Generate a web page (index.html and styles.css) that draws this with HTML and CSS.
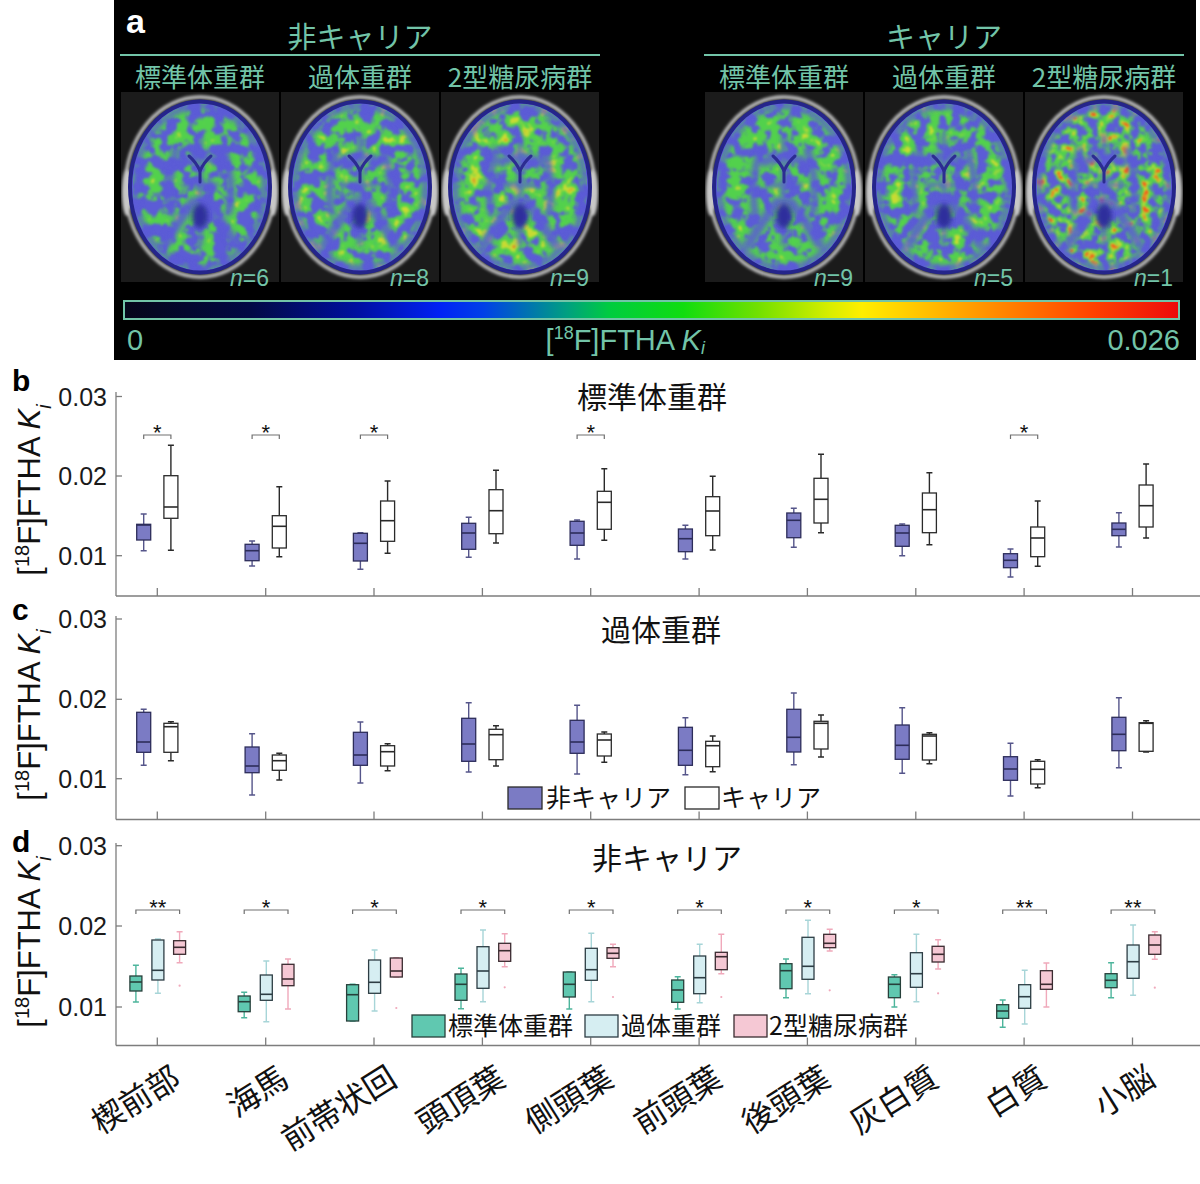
FILE: index.html
```html
<!DOCTYPE html>
<html lang="ja">
<head>
<meta charset="utf-8">
<title>[18F]FTHA Ki</title>
<link rel="stylesheet" href="styles.css">
</head>
<body>
<main class="figure">
  <section class="panel-a">
    <span class="panel-letter">a</span>
    <div class="group">
      <div class="group-title">非キャリア</div>
      <div class="cols">
        <figure class="col"><figcaption class="sub">標準体重群</figcaption><div class="scan"><span class="n"><i>n</i>=6</span></div></figure>
        <figure class="col"><figcaption class="sub">過体重群</figcaption><div class="scan"><span class="n"><i>n</i>=8</span></div></figure>
        <figure class="col"><figcaption class="sub">2型糖尿病群</figcaption><div class="scan"><span class="n"><i>n</i>=9</span></div></figure>
      </div>
    </div>
    <div class="group">
      <div class="group-title">キャリア</div>
      <div class="cols">
        <figure class="col"><figcaption class="sub">標準体重群</figcaption><div class="scan"><span class="n"><i>n</i>=9</span></div></figure>
        <figure class="col"><figcaption class="sub">過体重群</figcaption><div class="scan"><span class="n"><i>n</i>=5</span></div></figure>
        <figure class="col"><figcaption class="sub">2型糖尿病群</figcaption><div class="scan"><span class="n"><i>n</i>=1</span></div></figure>
      </div>
    </div>
    <div class="cbar-wrap">
      <div class="cbar"></div>
      <div class="cbar-labels"><span>0</span><span>[<sup>18</sup>F]FTHA <i>K<sub>i</sub></i></span><span>0.026</span></div>
    </div>
  </section>
  <svg class="chart chart-b" id="chart-b" viewBox="0 360 1200 237" xmlns="http://www.w3.org/2000/svg"></svg>
  <svg class="chart chart-c" id="chart-c" viewBox="0 597 1200 224" xmlns="http://www.w3.org/2000/svg"></svg>
  <svg class="chart chart-d" id="chart-d" viewBox="0 821 1200 363" xmlns="http://www.w3.org/2000/svg"></svg>
</main>
<script src="script.js"></script>
</body>
</html>
```

FILE: styles.css
```css
html, body {
  margin: 0;
  padding: 0;
  background: #ffffff;
}
body {
  font-family: "Liberation Sans", "Noto Sans CJK JP", sans-serif;
  color: #111;
}
.figure {
  width: 1200px;
  height: 1184px;
  overflow: hidden;
  display: flex;
  flex-direction: column;
}
.panel-a {
  position: relative;
  flex: none;
  margin-left: 114px;
  width: 1076px;
  height: 360px;
  padding-left: 6px;
  background: #000;
  display: grid;
  grid-template-columns: 480px 480px;
  grid-template-rows: auto auto;
  column-gap: 104px;
  align-content: start;
  color: #72c4a8;
  font-family: "Liberation Sans", "Noto Sans CJK JP", sans-serif;
}
.panel-letter {
  position: absolute;
  left: 12px;
  top: 4px;
  color: #fff;
  font-weight: bold;
  font-size: 34px;
  line-height: 34px;
}
.group-title {
  height: 38px;
  padding-top: 16px;
  line-height: 38px;
  border-bottom: 2px solid #72c4a8;
  text-align: center;
  font-size: 29px;
  font-family: "Noto Sans CJK JP", sans-serif;
}
.cols {
  display: grid;
  grid-template-columns: repeat(3, 160px);
}
.col {
  margin: 0;
}
.sub {
  height: 36px;
  line-height: 40px;
  font-size: 26px;
  text-align: center;
  white-space: nowrap;
  font-family: "Noto Sans CJK JP", sans-serif;
}
.scan {
  position: relative;
  width: 158px;
  height: 190px;
  margin: 0 auto;
}
.scan svg {
  display: block;
  width: 158px;
  height: 190px;
}
.n {
  position: absolute;
  right: 10px;
  bottom: -8px;
  font-size: 23px;
  line-height: 23px;
}
.cbar-wrap {
  grid-column: 1 / -1;
  margin-top: 18px;
}
.cbar {
  margin-left: 3px;
  width: 1053px;
  height: 16px;
  border: 2px solid #72c4a8;
  background: linear-gradient(to right,
    #06061a 0%, #020a45 12%, #0010a0 22%, #0022f5 30%, #0040e8 34%,
    #00a080 42%, #00cc40 46%, #10dd10 53%, #70e000 60%, #d8ee00 67%,
    #ffee00 70%, #ffc000 76%, #ff8000 84%, #ff4000 92%, #ee0a0a 100%);
}
.cbar-labels {
  margin-left: 7px;
  width: 1053px;
  display: flex;
  justify-content: space-between;
  font-size: 29px;
  line-height: 40px;
}
.cbar-labels sup {
  font-size: 0.62em;
  vertical-align: 0.62em;
  line-height: 0;
}
.cbar-labels sub {
  font-size: 0.62em;
  vertical-align: -0.25em;
  line-height: 0;
}
.chart {
  display: block;
  flex: none;
  width: 1200px;
  overflow: visible;
}
.chart-b { height: 237px; }
.chart-c { height: 224px; }
.chart-d { height: 363px; }
.ax {
  stroke: #7d7d7d;
  stroke-width: 1.3;
  fill: none;
}
.tick {
  font-size: 25px;
  fill: #1a1a1a;
}
.plet {
  font-size: 30px;
  font-weight: bold;
  fill: #000;
}
.ptitle {
  font-size: 30px;
  fill: #111;
  font-family: "Noto Sans CJK JP", sans-serif;
}
.ylab {
  font-size: 31px;
  fill: #111;
}
.leg {
  font-size: 25px;
  fill: #111;
  font-family: "Noto Sans CJK JP", sans-serif;
}
.xl {
  font-size: 32px;
  fill: #111;
  font-family: "Noto Sans CJK JP", sans-serif;
}
.star {
  font-size: 22px;
  fill: #111;
}
.br {
  stroke: #707070;
  stroke-width: 1.2;
  fill: none;
}
```

FILE: script.js
```js
(function () {
  var brainParams = [
    { seed: 3,  f: 0.075, g: 0.45, y: 0.74, r: 1.2 },
    { seed: 11, f: 0.075, g: 0.41, y: 0.66, r: 1.2 },
    { seed: 21, f: 0.075, g: 0.39, y: 0.61, r: 0.78 },
    { seed: 7,  f: 0.075, g: 0.41, y: 0.69, r: 1.2 },
    { seed: 17, f: 0.08,  g: 0.43, y: 0.67, r: 1.2 },
    { seed: 29, f: 0.095, g: 0.41, y: 0.59, r: 0.69 }
  ];
  function am(k, t) { return k + ' 0 0 0 ' + (-k * t).toFixed(3); }
  function brainSVG(i, p) {
    var id = 'br' + i;
    return '<svg viewBox="0 0 158 190" xmlns="http://www.w3.org/2000/svg">' +
      '<defs>' +
      '<clipPath id="' + id + 'c"><ellipse cx="79" cy="95" rx="67" ry="83"/></clipPath>' +
      '<filter id="' + id + 'n" x="0" y="0" width="1" height="1" color-interpolation-filters="sRGB">' +
      '<feTurbulence type="fractalNoise" baseFrequency="' + p.f + '" numOctaves="3" seed="' + p.seed + '" result="n"/>' +
      '<feColorMatrix in="n" type="matrix" result="g" values="0 0 0 0 0.32 0 0 0 0 0.82 0 0 0 0 0.3 ' + am(9, p.g) + '"/>' +
      '<feColorMatrix in="n" type="matrix" result="y" values="0 0 0 0 0.78 0 0 0 0 0.86 0 0 0 0 0.2 ' + am(11, p.y) + '"/>' +
      '<feColorMatrix in="n" type="matrix" result="r" values="0 0 0 0 0.95 0 0 0 0 0.35 0 0 0 0 0.1 ' + am(12, p.r) + '"/>' +
      '<feMerge result="m"><feMergeNode in="g"/><feMergeNode in="y"/><feMergeNode in="r"/></feMerge>' +
      '<feGaussianBlur in="m" stdDeviation="0.9"/>' +
      '</filter>' +
      '<filter id="' + id + 'b" x="-20%" y="-20%" width="140%" height="140%"><feGaussianBlur stdDeviation="2.4"/></filter>' +
      '<filter id="' + id + 's" x="-50%" y="-20%" width="200%" height="140%"><feGaussianBlur stdDeviation="1.6"/></filter>' +
      '</defs>' +
      '<rect width="158" height="190" fill="#1b1b1b"/>' +
      '<g filter="url(#' + id + 's)">' +
      '<ellipse cx="6" cy="100" rx="5" ry="24" fill="#d0d0d0"/>' +
      '<ellipse cx="152" cy="100" rx="5" ry="24" fill="#d0d0d0"/>' +
      '<ellipse cx="79" cy="95" rx="74.5" ry="90" fill="none" stroke="#c4c4c4" stroke-width="3.5"/>' +
      '</g>' +
      '<ellipse cx="79" cy="95" rx="72" ry="87.5" fill="#25258a"/>' +
      '<ellipse cx="79" cy="95" rx="68" ry="83.5" fill="#5c5cd6"/>' +
      '<g clip-path="url(#' + id + 'c)">' +
      '<rect x="10" y="10" width="138" height="170" filter="url(#' + id + 'n)"/>' +
      '<g filter="url(#' + id + 'b)" fill="none" stroke="#5c5cd6" stroke-linecap="round" opacity="0.85">' +
      '<ellipse cx="79" cy="95" rx="65" ry="81" stroke-width="6"/>' +
      '<path d="M79 44 L79 152" stroke-width="5"/>' +
      '<path d="M60 70 Q79 60 98 70" stroke-width="9"/>' +
      '<path d="M55 58 Q45 90 50 120" stroke-width="7"/>' +
      '<path d="M103 58 Q113 90 108 120" stroke-width="7"/>' +
      '<path d="M72 110 Q58 128 44 152" stroke-width="10"/>' +
      '<path d="M86 110 Q100 128 114 152" stroke-width="10"/>' +
      '<path d="M62 93 L96 93" stroke-width="5"/>' +
      '</g>' +
      '<g fill="none" stroke="#2c2c92" stroke-linecap="round" stroke-width="3">' +
      '<path d="M68 64 Q75 70 79 79 Q83 70 90 64"/>' +
      '<path d="M79 79 L79 90"/>' +
      '</g>' +
      '<ellipse cx="79" cy="124" rx="8" ry="12" fill="#2e2e9c" filter="url(#' + id + 'b)"/>' +
      '</g>' +
      '</svg>';
  }
  var scans = document.querySelectorAll('.scan');
  for (var i = 0; i < scans.length; i++) {
    scans[i].insertAdjacentHTML('afterbegin', brainSVG(i, brainParams[i]));
  }

  var T = [];
  for (var k = 0; k < 10; k++) T.push(157.3 + k * 108.35);
  function f(v) { return (Math.round(v * 10) / 10).toString(); }

  function box(cx, w, d, c) {
    var wt = d[0], bt = d[1], md = d[2], bb = d[3], wb = d[4], out = d[5];
    var h = w / 2, cap = 3;
    var s = '<g>';
    s += '<path d="M' + f(cx) + ' ' + bt + 'V' + wt + 'M' + f(cx - cap) + ' ' + wt + 'H' + f(cx + cap) +
      'M' + f(cx) + ' ' + bb + 'V' + wb + 'M' + f(cx - cap) + ' ' + wb + 'H' + f(cx + cap) +
      '" stroke="' + c.wh + '" stroke-width="1.4" fill="none"/>';
    s += '<rect x="' + f(cx - h) + '" y="' + bt + '" width="' + w + '" height="' + f(bb - bt) + '" fill="' + c.fill + '" stroke="' + c.st + '" stroke-width="1.3"/>';
    s += '<line x1="' + f(cx - h) + '" y1="' + md + '" x2="' + f(cx + h) + '" y2="' + md + '" stroke="' + c.st + '" stroke-width="1.6"/>';
    if (out) s += '<circle cx="' + f(cx) + '" cy="' + out + '" r="1.1" fill="' + c.wh + '"/>';
    return s + '</g>';
  }

  function axes(o) {
    var s = '';
    s += '<line class="ax" x1="116" y1="' + o.top + '" x2="116" y2="' + o.bottom + '"/>';
    s += '<line class="ax" x1="116" y1="' + o.bottom + '" x2="1200" y2="' + o.bottom + '"/>';
    var labels = ['0.03', '0.02', '0.01'];
    o.yt.forEach(function (y, j) {
      s += '<line class="ax" x1="116" y1="' + y + '" x2="122" y2="' + y + '"/>';
      s += '<text class="tick" x="107" y="' + f(y + 9) + '" text-anchor="end">' + labels[j] + '</text>';
    });
    T.forEach(function (x) {
      s += '<line class="ax" x1="' + f(x) + '" y1="' + o.bottom + '" x2="' + f(x) + '" y2="' + (o.bottom - 8) + '"/>';
    });
    s += '<text class="plet" x="12" y="' + o.letterY + '">' + o.letter + '</text>';
    s += '<text class="ptitle" x="' + o.titleX + '" y="' + o.titleY + '" text-anchor="middle">' + o.title + '</text>';
    s += '<text class="ylab" text-anchor="middle" transform="translate(40 ' + o.ylabY + ') rotate(-90)">[<tspan baseline-shift="super" font-size="20">18</tspan>F]FTHA <tspan font-style="italic">K</tspan><tspan baseline-shift="sub" font-size="20" font-style="italic">i</tspan></text>';
    return s;
  }

  function bracket(x1, x2, y, star) {
    return '<path class="br" d="M' + f(x1) + ' ' + (y + 4) + 'V' + y + 'H' + f(x2) + 'V' + (y + 4) + '"/>' +
      '<text class="star" x="' + f((x1 + x2) / 2) + '" y="' + (y + 5) + '" text-anchor="middle">' + star + '</text>';
  }

  var PURPLE = { fill: '#7b7bc4', st: '#2d2d5a', wh: '#55558a' };
  var WHITE = { fill: '#ffffff', st: '#2a2a2a', wh: '#2a2a2a' };
  var TEAL = { fill: '#60c8b0', st: '#27403b', wh: '#4db59c' };
  var LBLUE = { fill: '#d6eef2', st: '#2d3d44', wh: '#a7d5d8' };
  var PINK = { fill: '#f5c8d4', st: '#3a2b30', wh: '#f0a9bb' };

  /* panel b */
  var bP = [
    [514, 524.3, 525, 540, 550.7], [541, 544.3, 550.7, 560.7, 566], [532.7, 533.3, 543.3, 561, 569.3],
    [517.3, 523.3, 533, 549.3, 557.3], [520, 521.3, 533, 545.3, 559], [525.3, 529, 538.7, 551.7, 559],
    [508.3, 513, 520.3, 537.7, 547.3], [524, 525.3, 533, 546.3, 555.7], [549, 553.7, 560.3, 567.7, 577],
    [512.7, 523, 529.3, 535.7, 547]
  ];
  var bW = [
    [445.3, 475.7, 507, 518.3, 550.3], [486.7, 515.7, 526.3, 548, 556.7], [481, 501, 520.7, 541.3, 553.3],
    [470.3, 489.7, 510.7, 533.7, 543], [468.7, 491.3, 502.3, 529.3, 540.3], [476.3, 496.7, 511, 535.7, 550],
    [454.3, 478.3, 499.3, 523, 532.7], [472.7, 493, 509.7, 532.7, 544.7], [501, 527, 538, 556.7, 566.3],
    [464, 485, 505.7, 527, 538]
  ];
  var bSig = [0, 1, 2, 4, 8];
  var sb = axes({ top: 392, bottom: 596, yt: [396.5, 476, 555.7], letter: 'b', letterY: 391, title: '標準体重群', titleX: 652, titleY: 408, ylabY: 490 });
  for (var i2 = 0; i2 < 10; i2++) {
    sb += box(T[i2] - 13.6, 14, bP[i2], PURPLE);
    sb += box(T[i2] + 13.6, 14, bW[i2], WHITE);
  }
  bSig.forEach(function (j) { sb += bracket(T[j] - 13.6, T[j] + 13.6, 435, '*'); });
  document.getElementById('chart-b').innerHTML = sb;

  /* panel c */
  var cP = [
    [709.3, 712.3, 742, 752.3, 765.3], [733.7, 747, 766, 772.7, 795], [722, 732.3, 755, 765.3, 783],
    [702.7, 718.3, 744, 761.3, 772], [705.3, 720.3, 742, 753.3, 774], [717.7, 727.3, 750.3, 765.3, 774.7],
    [693, 709.3, 737.3, 752, 764.7], [707.7, 725, 745.3, 759.3, 773.3], [743.3, 756.7, 769, 780.3, 796],
    [697.7, 717.3, 734.3, 750.7, 767.7]
  ];
  var cW = [
    [721.7, 723.3, 726.7, 752.3, 760.7], [753.3, 755, 760.7, 770.3, 780], [743.7, 745.7, 751.7, 766, 770.7],
    [725.7, 729.3, 734.7, 759.7, 766], [732, 734, 740, 756, 762.3], [736, 741.3, 745.7, 766.7, 771.7],
    [715, 721.3, 723.3, 749, 757], [732.7, 734.3, 736, 760, 763.7], [759.7, 761.3, 769.3, 784, 787.7],
    [720.7, 722.7, 723.3, 751.3, 752]
  ];
  var sc = axes({ top: 616, bottom: 819.5, yt: [619, 699.3, 778.7], letter: 'c', letterY: 620, title: '過体重群', titleX: 661, titleY: 641, ylabY: 715 });
  for (var i3 = 0; i3 < 10; i3++) {
    sc += box(T[i3] - 13.6, 14, cP[i3], PURPLE);
    sc += box(T[i3] + 13.6, 14, cW[i3], WHITE);
  }
  sc += '<rect x="508" y="787" width="34" height="22" fill="' + PURPLE.fill + '" stroke="#2a2a2a" stroke-width="1.3"/>';
  sc += '<text class="leg" x="546" y="807">非キャリア</text>';
  sc += '<rect x="685" y="787" width="34" height="22" fill="#fff" stroke="#2a2a2a" stroke-width="1.3"/>';
  sc += '<text class="leg" x="721" y="807">キャリア</text>';
  document.getElementById('chart-c').innerHTML = sc;

  /* panel d */
  var dT = [
    [965.3, 976, 982, 991, 1002], [992.3, 996, 1001.7, 1011.7, 1017.7], [984.3, 984.7, 994.7, 1021, 1021],
    [968.3, 974, 984.3, 1000.3, 1008.7], [972, 972, 984.3, 997, 1009], [976.7, 980, 990, 1002.3, 1009],
    [959, 963.7, 970.7, 988.7, 997.7], [974.7, 977, 984.3, 997.7, 1007], [1000, 1004.7, 1011, 1018.3, 1027.3],
    [962.7, 973.7, 980.3, 987.7, 997.7]
  ];
  var dL = [
    [939, 940, 970.3, 980, 993.3], [961, 975, 994.3, 1000.3, 1021.7], [950, 960, 982.3, 993.3, 1011],
    [930, 946.7, 971, 988.3, 1001.7], [933.3, 948.3, 969.7, 980.3, 1001.7], [944.3, 956, 977.7, 993.7, 1002.7],
    [920.3, 937.3, 966.3, 979.3, 993.7], [934.3, 952.7, 973.7, 987.3, 1001.7], [970.3, 984.7, 996.7, 1008.3, 1024],
    [925, 945, 961.7, 978.3, 995.3]
  ];
  var dK = [
    [931.7, 940.7, 947.3, 954.3, 962.7, 985.7], [959, 964.3, 979, 985.7, 1009, 0], [957.7, 958, 971, 977, 977, 1008],
    [933.7, 943.3, 950.7, 961.3, 966.7, 987.3], [944.3, 947.7, 953.3, 958.3, 966.7, 997], [934.3, 952.3, 956.7, 969.7, 973.7, 997],
    [929.3, 934.3, 943.3, 947.7, 951, 990.3], [939.7, 946.3, 954.3, 962, 969, 993.3], [963, 970.7, 984.3, 989.3, 1007, 0],
    [931.7, 935, 945, 954.3, 959.3, 987.7]
  ];
  var dSig = ['**', '*', '*', '*', '*', '*', '*', '*', '**', '**'];
  var sd = axes({ top: 843, bottom: 1045.5, yt: [845.7, 926, 1007], letter: 'd', letterY: 852, title: '非キャリア', titleX: 667, titleY: 869, ylabY: 942 });
  for (var i4 = 0; i4 < 10; i4++) {
    sd += box(T[i4] - 21.4, 12, dT[i4], TEAL);
    sd += box(T[i4] + 0.6, 12, dL[i4], LBLUE);
    sd += box(T[i4] + 22.3, 12, dK[i4], PINK);
    sd += bracket(T[i4] - 21.4, T[i4] + 22.3, 910, dSig[i4]);
  }
  sd += '<rect x="412" y="1015" width="33" height="22" fill="' + TEAL.fill + '" stroke="#27403b" stroke-width="1.3"/>';
  sd += '<text class="leg" x="448" y="1035">標準体重群</text>';
  sd += '<rect x="585" y="1015" width="33" height="22" fill="' + LBLUE.fill + '" stroke="#2d3d44" stroke-width="1.3"/>';
  sd += '<text class="leg" x="621" y="1035">過体重群</text>';
  sd += '<rect x="734" y="1015" width="33" height="22" fill="' + PINK.fill + '" stroke="#3a2b30" stroke-width="1.3"/>';
  sd += '<text class="leg" x="769" y="1035">2型糖尿病群</text>';
  var names = ['楔前部', '海馬', '前帯状回', '頭頂葉', '側頭葉', '前頭葉', '後頭葉', '灰白質', '白質', '小脳'];
  names.forEach(function (nm, j) {
    sd += '<text class="xl" text-anchor="end" transform="translate(' + f(T[j] + 25) + ' 1084) rotate(-32)">' + nm + '</text>';
  });
  document.getElementById('chart-d').innerHTML = sd;
})();
```
